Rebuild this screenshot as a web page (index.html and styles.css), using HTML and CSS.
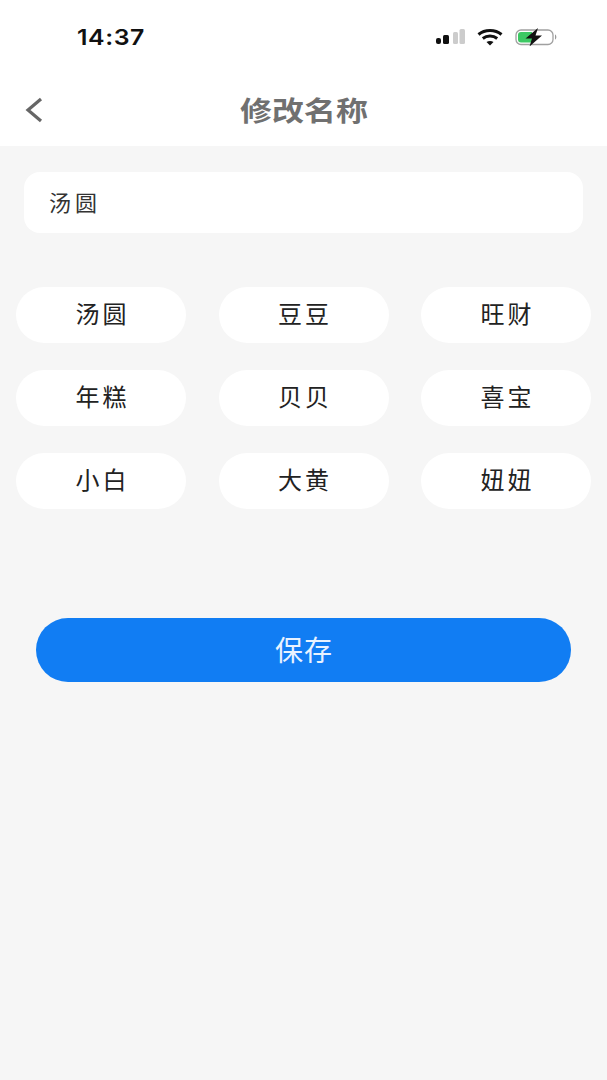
FILE: index.html
```html
<!DOCTYPE html>
<html lang="zh-CN">
<head>
<meta charset="utf-8">
<title>修改名称</title>
<link rel="stylesheet" href="styles.css">
</head>
<body>
<header class="top">
  <div class="status">
    <span class="time">14:37</span>
    <div class="status-icons">
      <svg class="signal" width="30" height="16" viewBox="0 0 30 16"><rect x="0" y="9" width="5" height="6" rx="2" fill="#111"/><rect x="7" y="6" width="6" height="9" rx="1.500" fill="#111"/><rect x="17" y="3" width="5" height="12" rx="1.500" fill="#ccc"/><rect x="23.500" y="0" width="5.500" height="15" rx="1.500" fill="#ccc"/></svg>
      <svg class="wifi" width="26" height="18" viewBox="0 0 26 18"><path d="M1.500 6.500C7.800 1 18.200 1 24.500 6.500" fill="none" stroke="#111" stroke-width="3"/><path d="M5.800 10.500C9.800 7.300 16.200 7.300 20.200 10.500" fill="none" stroke="#111" stroke-width="3"/><path d="M9.500 14L13 17.500L16.500 14C14.500 12.500 11.500 12.500 9.500 14Z" fill="#111"/></svg>
      <svg class="battery" width="43" height="18" viewBox="0 0 43 18"><rect x="1" y="2" width="37" height="14.500" rx="5" fill="#fff" stroke="#a0a0a0" stroke-width="1.300"/><path d="M3 7C3 5 4 4 6 4H17V14.500H6C4 14.500 3 13.500 3 11.500Z" fill="#3cc863"/><path d="M40 6.500C41.800 7 41.800 11 40 11.500Z" fill="#999"/><path d="M23 0L10.500 10.500H17L14.500 18.500L27 7.500H20.500Z" fill="#111"/></svg>
    </div>
  </div>
  <div class="nav">
    <svg class="back" width="20" height="28" viewBox="0 0 20 28"><path d="M17 3L4 14L17 25" fill="none" stroke="#666" stroke-width="3.200"/></svg>
    <h1 class="title">修改名称</h1>
  </div>
</header>
<main class="content">
  <div class="field">汤圆</div>
  <ul class="names">
    <li class="name">汤圆</li>
    <li class="name">豆豆</li>
    <li class="name">旺财</li>
    <li class="name">年糕</li>
    <li class="name">贝贝</li>
    <li class="name">喜宝</li>
    <li class="name">小白</li>
    <li class="name">大黄</li>
    <li class="name">妞妞</li>
  </ul>
  <button class="save" type="button">保存</button>
</main>
</body>
</html>
```
FILE: styles.css
```css
* { box-sizing: border-box; }
html, body { margin: 0; padding: 0; }
body {
  width: 607px;
  height: 1080px;
  overflow: hidden;
  background: #f6f6f6;
  font-family: "Noto Sans CJK SC", "Noto Sans", sans-serif;
  color: #222;
}
.top { background: #fff; height: 146px; }
.status {
  height: 74px;
  display: flex;
  justify-content: space-between;
  align-items: flex-start;
  padding: 22px 49px 0 77px;
}
.time {
  display: inline-block;
  font-family: "Inter", "Liberation Sans", sans-serif;
  font-size: 22px;
  line-height: 30px;
  font-weight: 600;
  letter-spacing: 0.5px;
  color: #111;
  transform: scaleX(1.13);
  transform-origin: left center;
}
.status-icons { display: flex; align-items: center; gap: 11px; height: 30px; }
.wifi { margin-right: 1px; }
.nav {
  position: relative;
  height: 72px;
  display: flex;
  align-items: center;
  justify-content: center;
}
.back { position: absolute; left: 24px; top: 22px; }
.title {
  margin: 0;
  font-size: 27px;
  line-height: 72px;
  font-weight: 700;
  color: #707070;
  transform: scaleX(1.185);
}
.content { padding: 26px 16px 0; }
.field {
  margin: 0 8px;
  height: 61px;
  padding-left: 25px;
  background: #fff;
  border-radius: 16px;
  font-size: 22px;
  letter-spacing: 4px;
  line-height: 59px;
  color: #333;
}
.names {
  list-style: none;
  margin: 54px 0 0;
  padding: 0;
  display: grid;
  grid-template-columns: repeat(3, 170px);
  justify-content: space-between;
  row-gap: 27px;
}
.name {
  height: 56px;
  background: #fff;
  border-radius: 28px;
  text-align: center;
  font-size: 24px;
  letter-spacing: 3px;
  padding-left: 3px;
  line-height: 51px;
  color: #222;
}
.save {
  display: block;
  width: 535px;
  height: 64px;
  margin: 109px 0 0 20px;
  padding: 0 0 3px 1px;
  border: 0;
  border-radius: 32px;
  background: #117df3;
  color: #e8f2ff;
  font-family: inherit;
  font-size: 28px;
  letter-spacing: 1px;
}
```
